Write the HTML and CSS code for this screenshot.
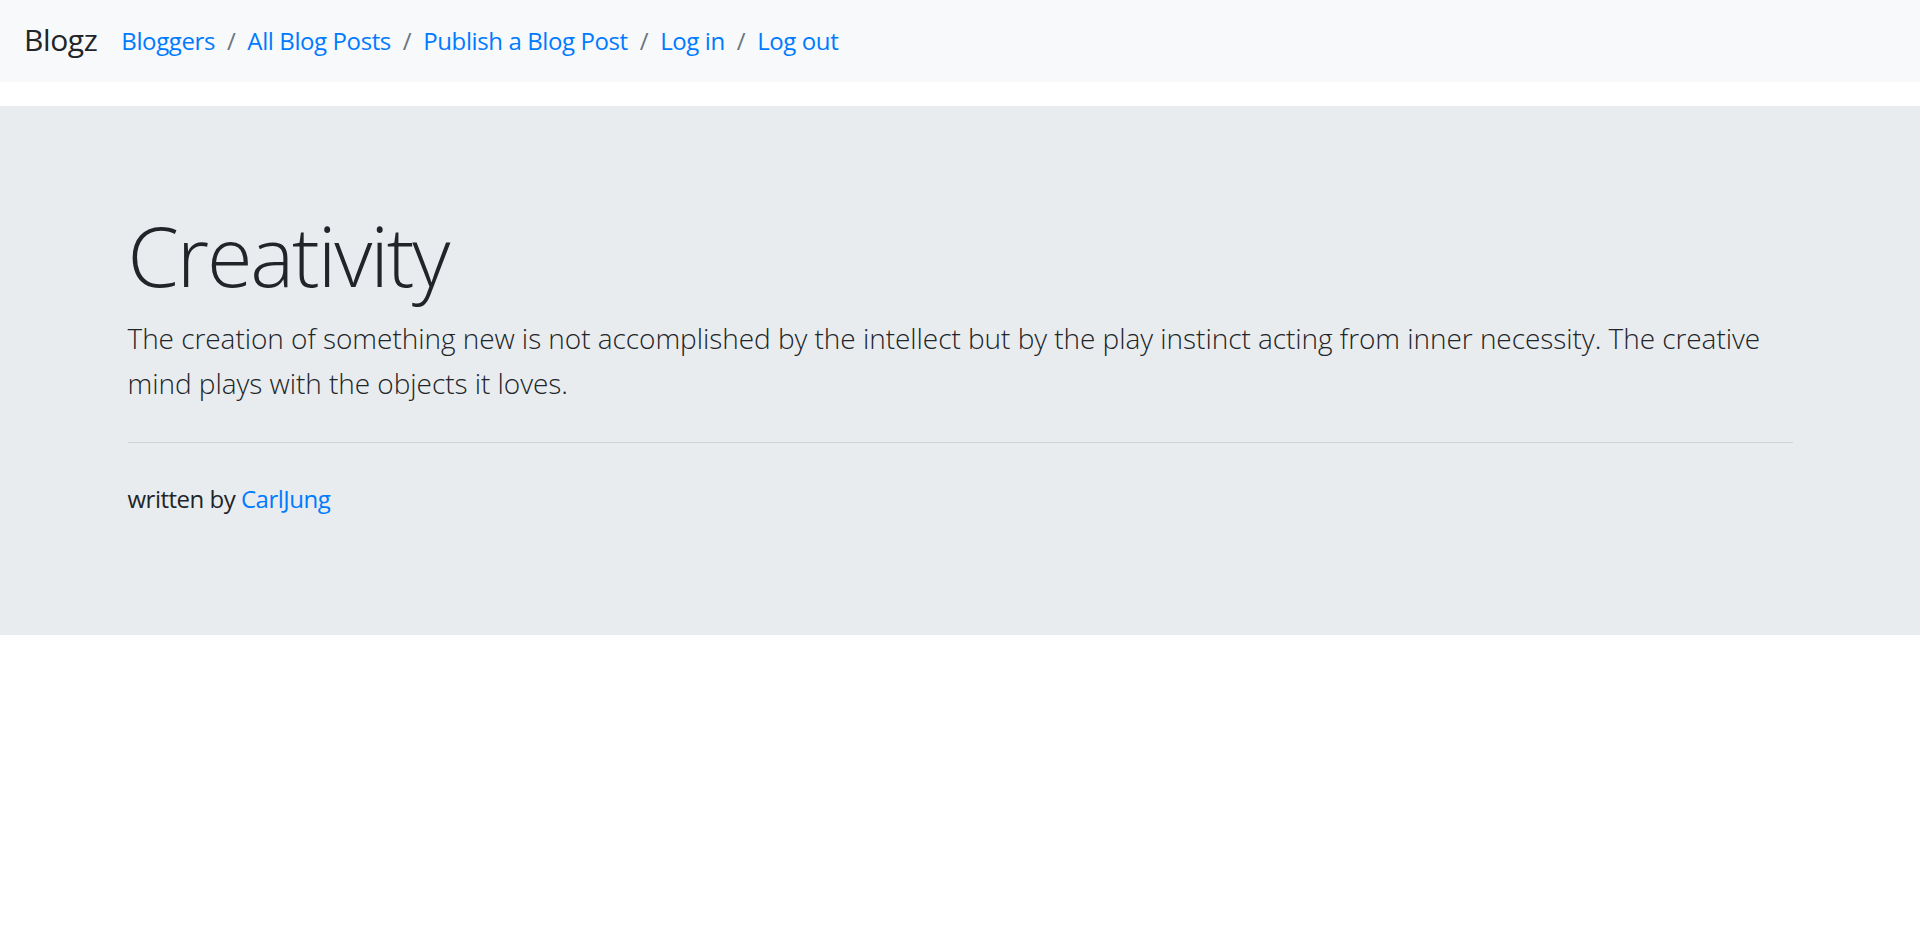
FILE: index.html
```html
<!DOCTYPE html>
<html lang="en">
<head>
<meta charset="utf-8">
<title>Blogz</title>
<link rel="stylesheet" href="styles.css">
</head>
<body>
<nav class="navbar">
  <a class="brand" href="#">Blogz</a>
  <ol class="crumbs">
    <li class="crumb"><a href="#">Bloggers</a></li>
    <li class="crumb"><a href="#">All Blog Posts</a></li>
    <li class="crumb"><a href="#">Publish a Blog Post</a></li>
    <li class="crumb"><a href="#">Log in</a></li>
    <li class="crumb"><a href="#">Log out</a></li>
  </ol>
</nav>
<main class="jumbotron">
  <div class="container">
    <h1 class="display">Creativity</h1>
    <p class="lead">The creation of something new is not accomplished by the intellect but by the play instinct acting from inner necessity. The creative mind plays with the objects it loves.</p>
    <hr class="rule">
    <p class="byline">written by <a href="#">CarlJung</a></p>
  </div>
</main>
</body>
</html>
```
FILE: styles.css
```css
html, body {
  margin: 0;
  padding: 0;
}
body {
  font-family: "Open Sans", "Noto Sans", "Liberation Sans", sans-serif;
  font-size: 24px;
  line-height: 1.5;
  color: #212529;
  background: #fff;
}
a {
  color: #007bff;
  text-decoration: none;
}
.navbar {
  display: flex;
  align-items: flex-start;
  box-sizing: border-box;
  height: 82px;
  padding: 12px 24px;
  background: #f8f9fa;
  margin-bottom: 24px;
}
.brand {
  color: #212529;
  font-size: 30px;
  line-height: 45px;
  letter-spacing: -0.4px;
  padding: 5px 0 4px;
  margin-right: 24px;
}
.crumbs {
  display: flex;
  list-style: none;
  margin: 11px 0 0;
  padding: 0;
  line-height: 36px;
  letter-spacing: -0.4px;
}
.crumb + .crumb {
  padding-left: 12px;
}
.crumb + .crumb::before {
  content: "/";
  color: #6c757d;
  padding-right: 12px;
}
.jumbotron {
  display: block;
  background: #e9ecef;
  padding: 96px 0;
}
.container {
  padding: 0 127.5px;
}
.display {
  font-size: 83px;
  font-weight: 300;
  letter-spacing: -2.2px;
  line-height: 100.8px;
  margin: 0 0 12px;
  padding-top: 3px;
  height: 97.8px;
}
.lead {
  font-size: 28px;
  font-weight: 300;
  line-height: 45px;
  letter-spacing: -0.05px;
  padding-top: 1px;
  margin: 0 0 23px;
}
.rule {
  border: 0;
  border-top: 1px solid rgba(0, 0, 0, 0.1);
  margin: 36px 0;
  height: 0;
}
.byline {
  margin: 0 0 22px;
  padding-top: 2px;
  line-height: 36px;
  letter-spacing: -0.5px;
}
```
